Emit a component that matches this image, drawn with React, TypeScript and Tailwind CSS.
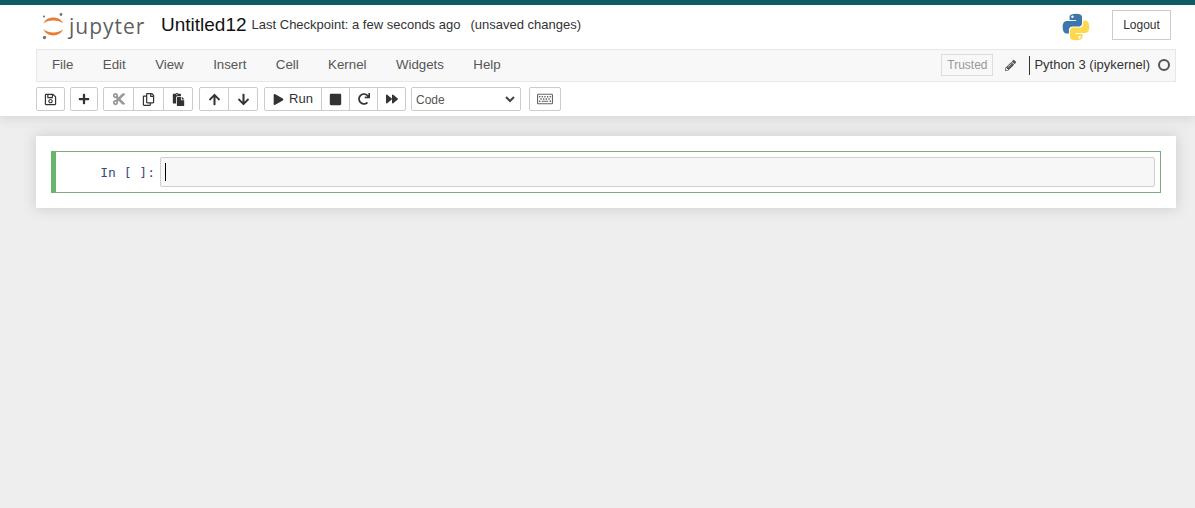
import React from "react";
import { FaRegSave, FaPlus, FaCut, FaRegCopy, FaPaste, FaArrowUp, FaArrowDown, FaPlay, FaStop, FaRedo, FaForward, FaRegKeyboard, FaPencilAlt } from "react-icons/fa";

const Btn = ({ children, w, first, last }: { children: React.ReactNode; w: string; first?: boolean; last?: boolean }) => (
  <div className={`h-[24px] ${w} flex items-center justify-center bg-white border border-[#ccc] text-[#333] -ml-px first:ml-0 ${first ? "rounded-l-[2px]" : ""} ${last ? "rounded-r-[2px]" : ""}`}>
    {children}
  </div>
);

const Jupyter = () => (
  <div className="flex items-center w-[105px] h-[28px] -mt-[2px]">
    <svg width="26" height="30" viewBox="0 0 26 30" className="shrink-0">
      <path d="M2.500 12.500 C5 4.500 19.500 4.500 22 12.500 C18.500 8.500 6 8.500 2.500 12.500 Z" fill="#e67e33" />
      <path d="M2.500 18 C5 26.500 19.500 26.500 22 18 C18.500 22.500 6 22.500 2.500 18 Z" fill="#e67e33" />
      <circle cx="20" cy="3.500" r="1.400" fill="#767677" />
      <circle cx="3" cy="5.500" r="1.100" fill="#767677" />
      <circle cx="3.500" cy="26.500" r="1.700" fill="#767677" />
    </svg>
    <span className="ml-[2px] text-[21px] leading-[28px] tracking-[1px] text-[#5f5f5f] font-['Open_Sans','Liberation_Sans',sans-serif]">jupyter</span>
  </div>
);

const PythonLogo = () => (
  <svg width="30" height="30" viewBox="0 0 110 110" className="shrink-0">
    <path d="M54.9 6C30 6 31.5 17 31.5 17L31.5 29H55.5V33H22S6 31.5 6 55S20 79 20 79H29V67S28 53 42 53H65S77 53.500 77 41V19S79 6 54.900 6ZM42 13A4.500 4.500 0 1 1 42 22A4.500 4.500 0 0 1 42 13Z" fill="#3b77a8" />
    <path d="M54.9 6C30 6 31.5 17 31.5 17L31.5 29H55.5V33H22S6 31.5 6 55S20 79 20 79H29V67S28 53 42 53H65S77 53.500 77 41V19S79 6 54.900 6ZM42 13A4.500 4.500 0 1 1 42 22A4.500 4.500 0 0 1 42 13Z" fill="#fdd94f" transform="rotate(180 55 55)" />
  </svg>
);

export default function App() {
  return (
    <div className="h-[508px] w-full overflow-hidden bg-[#eeeeee] font-['Liberation_Sans',Arial,sans-serif] text-[#000] flex flex-col">
      <div className="bg-white border-t-[5px] border-[#0b5c63] h-[116px] shrink-0 shadow-[0_0_12px_1px_rgba(87,87,87,0.2)] relative z-10 flex flex-col">
        <div className="h-[44px] pl-[41px] pr-[24px] flex items-center">
          <Jupyter />
          <span className="ml-[15px] text-[19px] leading-[28px] -mt-[5px] text-[#111]">Untitled12</span>
          <span className="ml-[5px] text-[13px] leading-[28px] -mt-[4px] text-[#333]">Last Checkpoint: a few seconds ago</span>
          <span className="ml-[10px] text-[13px] leading-[28px] -mt-[4px] text-[#333]">(unsaved changes)</span>
          <div className="ml-auto flex items-center">
            <PythonLogo />
            <div className="ml-[21px] w-[59px] h-[30px] -mt-[4px] border border-[#ccc] text-[12px] text-[#333] flex items-center justify-center">Logout</div>
          </div>
        </div>
        <div className="ml-[36px] mr-[19px] h-[33px] bg-[#f8f8f8] border border-[#e7e7e7] flex items-center text-[#555] pl-[15px] pr-[5px] shrink-0">
          <div className="flex gap-[29.4px] text-[13.3px] -mt-[1px]">
            <span>File</span><span>Edit</span><span>View</span><span>Insert</span><span>Cell</span><span>Kernel</span><span>Widgets</span><span>Help</span>
          </div>
          <div className="ml-auto flex items-center -mt-[1px]">
            <div className="w-[52px] h-[22px] border border-[#ddd] text-[#999] text-[12px] flex items-center justify-center">Trusted</div>
            <FaPencilAlt className="ml-[12px] text-[#555]" size={11} />
            <div className="ml-[13px] w-px h-[19px] bg-[#333]" />
            <span className="ml-[4px] text-[#333] text-[13px]">Python 3 (ipykernel)</span>
            <div className="ml-[8px] w-[12px] h-[12px] rounded-full border-2 border-[#555]" />
          </div>
        </div>
        <div className="ml-[36px] mr-[19px] mt-[5px] flex items-center h-[24px]">
          <div className="flex"><Btn w="w-[29px]" first last><FaRegSave size={13} /></Btn></div>
          <div className="flex ml-[5px]"><Btn w="w-[28px]" first last><FaPlus size={12} /></Btn></div>
          <div className="flex ml-[5px]">
            <Btn w="w-[31px]" first><FaCut size={14} className="text-[#999]" /></Btn>
            <Btn w="w-[31px]"><FaRegCopy size={13} /></Btn>
            <Btn w="w-[30px]" last><FaPaste size={13} /></Btn>
          </div>
          <div className="flex ml-[6px]">
            <Btn w="w-[30px]" first><FaArrowUp size={13} /></Btn>
            <Btn w="w-[30px]" last><FaArrowDown size={13} /></Btn>
          </div>
          <div className="flex ml-[6px]">
            <Btn w="w-[58px]" first><FaPlay size={11} /><span className="ml-[5px] text-[13px]">Run</span></Btn>
            <Btn w="w-[29px]"><FaStop size={13} /></Btn>
            <Btn w="w-[29px]"><FaRedo size={12} /></Btn>
            <Btn w="w-[29px]" last><FaForward size={12} /></Btn>
          </div>
          <div className="ml-[5px] w-[110px] h-[24px] bg-white border border-[#ccc] rounded-[2px] flex items-center pl-[4px] pr-[5px] text-[12px] text-[#555]">
            <span className="mt-[1px]">Code</span>
            <svg className="ml-auto" width="10" height="7" viewBox="0 0 10 7"><path d="M1 1L5 5L9 1" fill="none" stroke="#444" strokeWidth="2" /></svg>
          </div>
          <div className="ml-[8px] flex"><Btn w="w-[32px]" first last><FaRegKeyboard size={16} className="text-[#666]" /></Btn></div>
        </div>
      </div>
      <div className="mt-[20px] ml-[36px] mr-[19px] h-[72px] bg-white shadow-[0_0_12px_1px_rgba(87,87,87,0.2)] p-[15px] shrink-0">
        <div className="h-[42px] border border-[#7cab7e] border-l-[5px] border-l-[#66b56a] flex items-center pl-0 pr-[5px]">
          <div className="w-[104px] text-right pr-[5px] font-['DejaVu_Sans_Mono',monospace] text-[13px] text-[#3c4a80] mt-[1px] whitespace-pre shrink-0">In [ ]:</div>
          <div className="flex-1 h-[30px] border border-[#cfcfcf] rounded-[2px] bg-[#f7f7f7] flex items-center pl-[4px]">
            <div className="w-px h-[18px] bg-black" />
          </div>
        </div>
      </div>
    </div>
  );
}
